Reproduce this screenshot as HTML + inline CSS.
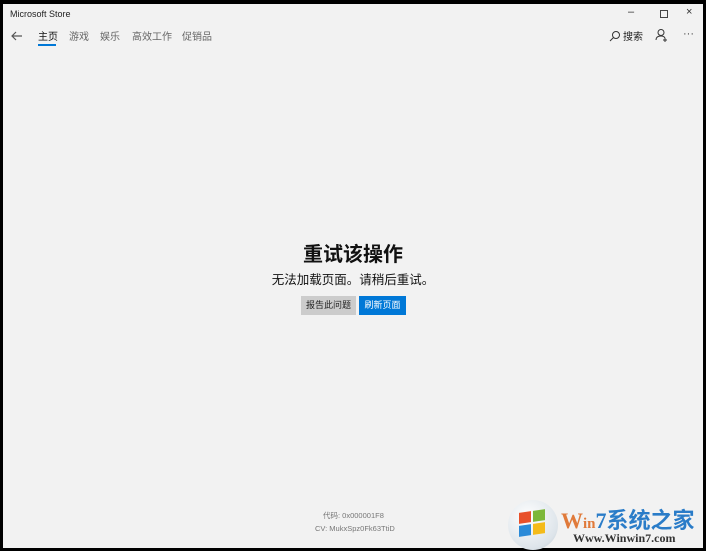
<!DOCTYPE html>
<html><head><meta charset="utf-8"><style>
body{margin:0;width:706px;height:551px;background:#000;overflow:hidden;position:relative;font-family:"Liberation Sans","Noto Sans CJK SC",sans-serif}
#w{position:absolute;left:3px;top:4px;width:700px;height:544px;background:#f2f2f2}
.t{position:absolute;white-space:nowrap}
</style></head><body>
<div id="w">
<div class="t" style="left:7px;top:5px;font-size:9px;color:#222">Microsoft Store</div>
<div class="t" style="left:625px;top:2px;font-size:11px;color:#333">–</div>
<div style="position:absolute;left:657px;top:6px;width:6px;height:6px;border:1px solid #444"></div>
<div class="t" style="left:683px;top:2px;font-size:11px;color:#333">×</div>
<svg style="position:absolute;left:8px;top:27px" width="12" height="10"><path d="M11 5H1M5 1L1 5L5 9" stroke="#555" fill="none" stroke-width="1.2"/></svg>
<div class="t" style="left:35px;top:24px;font-size:10px;color:#111">主页</div>
<div style="position:absolute;left:35px;top:40px;width:18px;height:2px;background:#0078d7"></div>
<div class="t" style="left:66px;top:24px;font-size:10px;color:#666">游戏</div>
<div class="t" style="left:97px;top:24px;font-size:10px;color:#666">娱乐</div>
<div class="t" style="left:129px;top:24px;font-size:10px;color:#666">高效工作</div>
<div class="t" style="left:179px;top:24px;font-size:10px;color:#666">促销品</div>
<svg style="position:absolute;left:606px;top:26px" width="12" height="12"><circle cx="7" cy="5" r="3.5" stroke="#333" fill="none"/><path d="M4.5 7.5L1 11" stroke="#333"/></svg>
<div class="t" style="left:620px;top:24px;font-size:10px;color:#222">搜索</div>
<svg style="position:absolute;left:652px;top:24px" width="14" height="14"><circle cx="6" cy="4.5" r="3" stroke="#333" fill="none"/><path d="M1 12Q1 8 6 8Q9 8 10 10M10 10v4M8 12h4" stroke="#333" fill="none"/></svg>
<div class="t" style="left:680px;top:24px;font-size:11px;color:#444">···</div>
<div class="t" style="left:0;width:700px;text-align:center;top:234px;font-size:20px;font-weight:bold;color:#111">重试该操作</div>
<div class="t" style="left:0;width:700px;text-align:center;top:265px;font-size:12.5px;color:#111">无法加载页面。请稍后重试。</div>
<div class="t" style="left:298px;top:292px;width:55px;height:19px;background:#ccc;font-size:9px;color:#222;text-align:center;line-height:19px">报告此问题</div>
<div class="t" style="left:356px;top:292px;width:47px;height:19px;background:#0078d7;font-size:9px;color:#fff;text-align:center;line-height:19px">刷新页面</div>
<div class="t" style="left:320px;top:506px;font-size:7.5px;color:#777">代码: 0x000001F8</div>
<div class="t" style="left:312px;top:520px;font-size:7.5px;color:#777">CV: MukxSpz0Fk63TtiD</div>
<div style="position:absolute;left:505px;top:496px;width:50px;height:50px;border-radius:50%;background:radial-gradient(circle at 40% 35%,#fff,#dde4ea 70%,#b8c4cc)"></div>
<div style="position:absolute;left:516px;top:508px;width:12px;height:11px;background:#e8502a;transform:skewY(-8deg)"></div>
<div style="position:absolute;left:530px;top:506px;width:12px;height:11px;background:#7cb83a;transform:skewY(-8deg)"></div>
<div style="position:absolute;left:516px;top:521px;width:12px;height:11px;background:#2a8ad8;transform:skewY(-8deg)"></div>
<div style="position:absolute;left:530px;top:519px;width:12px;height:11px;background:#f4bb1a;transform:skewY(-8deg)"></div>
<div class="t" style="left:558px;top:499px;font-size:22px;font-weight:bold;color:#e07a3a;font-family:'Liberation Serif','Noto Serif CJK SC',serif">W<span style="font-size:15px">in</span><span style="color:#2a7cc8">7</span><span style="color:#2a7cc8;font-family:'Noto Sans CJK SC',sans-serif">系统之家</span></div>
<div class="t" style="left:570px;top:527px;font-size:12px;font-weight:bold;color:#333;font-family:'Liberation Serif',serif">Www.Winwin7.com</div>
</div>
</body></html>
